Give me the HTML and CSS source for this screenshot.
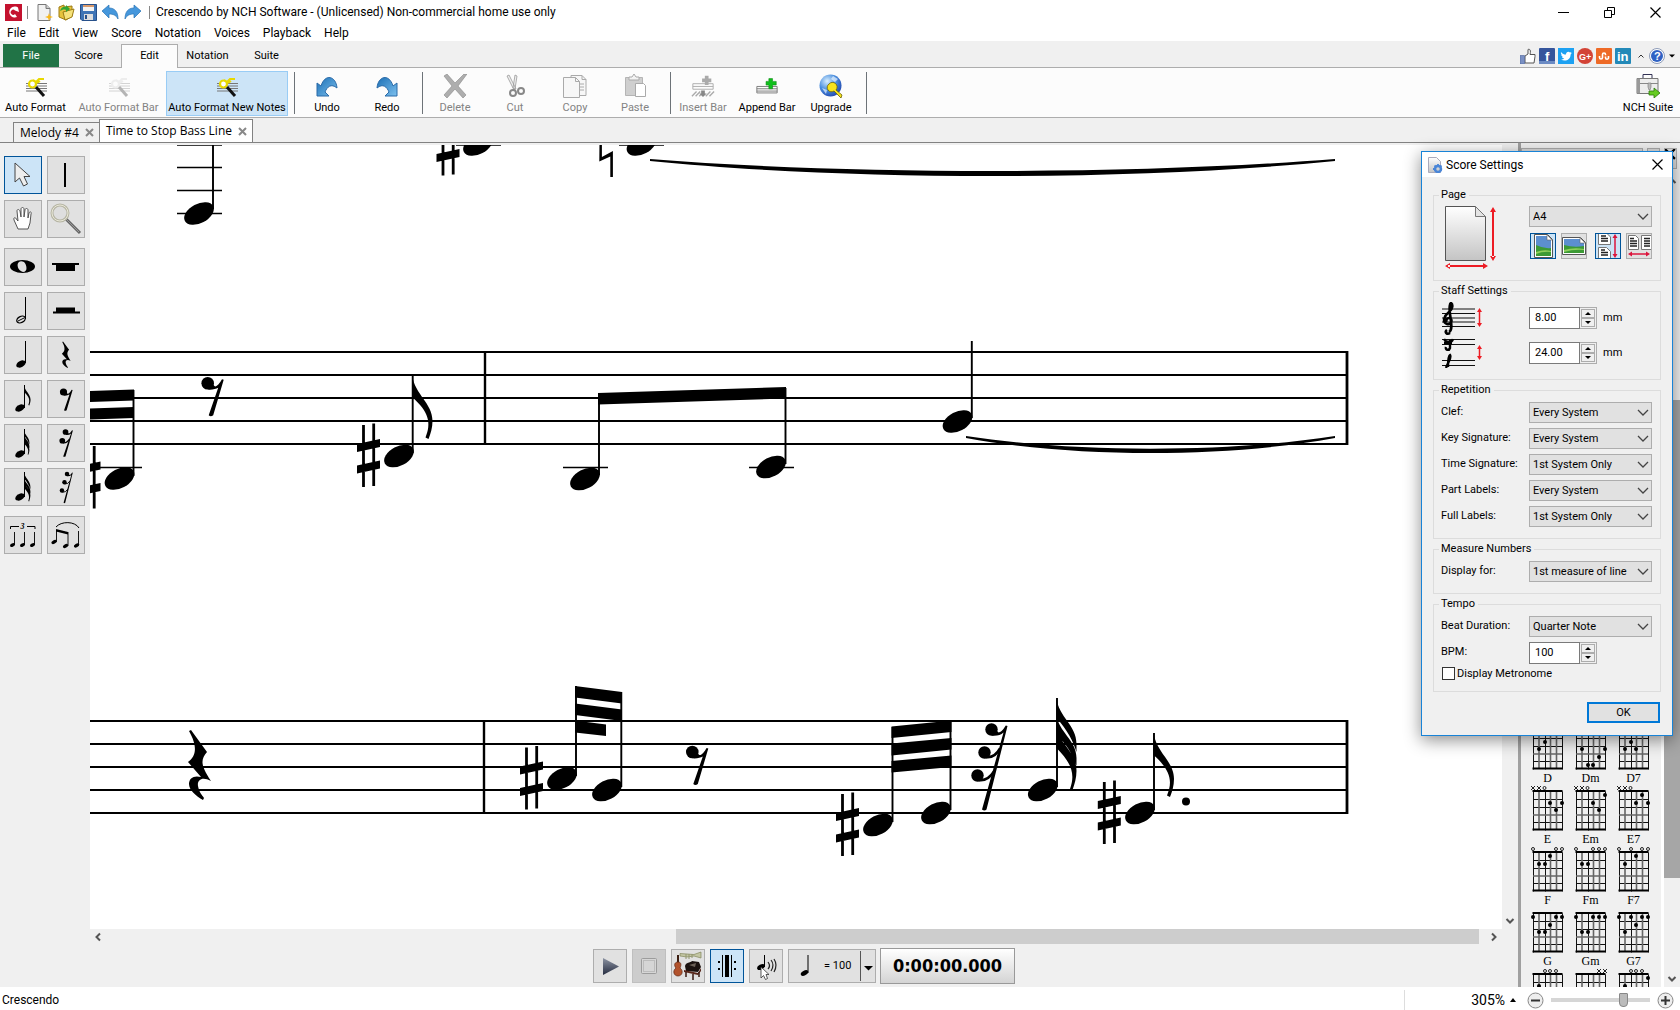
FILE: index.html
```html
<!DOCTYPE html>
<html lang="en">
<head>
<meta charset="utf-8">
<title>Crescendo by NCH Software</title>
<link rel="stylesheet" href="styles.css">
</head>
<body>
<svg class="defs" aria-hidden="true">
  <defs>
    <linearGradient id="blue" x1="0" y1="0" x2="1" y2="1"><stop offset="0" stop-color="#1b6fb5"/><stop offset="1" stop-color="#7cc0ee"/></linearGradient>
    <linearGradient id="paper" x1="0" y1="0" x2="0" y2="1"><stop offset="0" stop-color="#fff"/><stop offset="1" stop-color="#c4c4c4"/></linearGradient>
    <linearGradient id="play" x1="0" y1="0" x2="0" y2="1"><stop offset="0" stop-color="#8d94a3"/><stop offset="1" stop-color="#252c40"/></linearGradient>
    <radialGradient id="globe" cx=".35" cy=".3" r=".8"><stop offset="0" stop-color="#d8efff"/><stop offset=".5" stop-color="#4a8ede"/><stop offset="1" stop-color="#1d3fa8"/></radialGradient>
    <g id="head"><ellipse rx="16" ry="9.6" transform="rotate(-28)"/></g>
    <g id="sharp"><path d="M-6.400-31h2.800v62h-2.800zM3.800-32.500h2.800v62.500h-2.800zM-11.500-12l23-5v8l-23 5zM-11.500 9.500l23-5v8l-23 5z"/></g>
    <g id="rest8"><circle r="6.300"/><path d="M0 6.300C5 6.800 8 5.500 10.500 4.500L1 32Q3 34 5.500 32L16-3.500 14.300-4C12 0 9 3.800 7 3L5 1z"/></g>
    <g id="restq"><path d="M4 0L20 22C13 30 14 36 24 51C15 46 10 50 11 56C12 62 15 65 17 68L16 70C9 66 2 60 2 54C2 48 7 45 14 47L1 32C9 26 11 17 2 1z"/></g>
    <g id="rest32"><circle r="6.200"/><circle cx="-7" cy="23" r="6.200"/><circle cx="-14" cy="46" r="6.200"/><path d="M0 6.200Q8 7 12 3L-9.500 80Q-7 82-5 80L16-3.500 14.300-4Q10 3 7 3L5 1z"/><path d="M-6 27.500Q3 29 8.500 19M-13 50.500Q-4 52 2.500 42" fill="none" stroke="#000" stroke-width="2.600"/></g>
    <g id="rest16"><circle r="6.200"/><circle cx="-7" cy="19" r="6.200"/><path d="M0 6.200Q8 7 12 3L-5 53Q-3 55 0 53L16-3.500 14.300-4Q10 3 7 3L5 1z"/><path d="M-6 23.500Q3 25 9 15" fill="none" stroke="#000" stroke-width="2.600"/></g>
    <g id="flag"><path d="M0 0C3 20 20.500 28 20.500 46C20.500 53 18.500 59 16.500 64L13.500 62.500C19.500 48 17 37 0 22z"/></g>
    <g id="flag3"><path d="M0 0C2 19 20 27 20 46V54C17 44 11 32 0 20zM0 17C2 34 20 42 20 60V68C16 56 10 46 0 37zM0 30C3 46 20 54 20 73C20 80 18 86 16 92L13.500 91C19 76 15 65 0 50z"/></g>
    <g id="wand"><path d="M2 9.500h21M2 12h21M2 14.500h21M2 17h21" stroke="#777"/><circle cx="8.500" cy="10" r="3.500" fill="#fff" stroke="#e8d800" stroke-width="2.200"/><path d="M9 6l3 2 3-3h5M13 9l3-2" fill="none" stroke="#e8d800" stroke-width="2"/><path d="M12 13l8 9" stroke="#111" stroke-width="3"/></g>
    <g id="chordgrid"><path d="M7 4v39M19 4v39M36 4v39M7 12h29M7 20h29M7 35h29" stroke="#111" stroke-width="1" transform="translate(.5 .5)"/><path d="M13 4v39M24.500 4v39M30.500 4v39M7 28h29" stroke="#666" stroke-width="1.600"/><path d="M6.500 4h30M6.500 42.500h30" stroke="#000" stroke-width="2"/></g>
    <g id="chev"><path d="M1 1l5 5 5-5" fill="none" stroke="#444" stroke-width="1.300"/></g>
  </defs>
</svg>

<header class="titlebar">
  <svg class="i17" viewBox="0 0 17 17"><rect width="17" height="17" fill="#c4122f"/><path d="M13 3.500A5.500 5.500 0 1 0 12 13L10 10A2.500 2.500 0 1 1 10 6.500L14 8z" fill="#fff"/></svg>
  <span class="tsep"></span>
  <button aria-label="New"><svg class="i17" viewBox="0 0 17 17"><path d="M2 .5h8l4 4v12H2z" fill="#f1f1f1" stroke="#777"/><path d="M10 .5v4h4" fill="#ccc" stroke="#777"/><path d="M13 9l1 3 3 1-3 1-1 3-1-3-3-1 3-1z" fill="#f8b616"/></svg></button>
  <button aria-label="Open"><svg class="i17" viewBox="0 0 17 17"><path d="M1 3l5-2v2l8-1v10l-6 4-7-3z" fill="#e6c33c" stroke="#9c7b12"/><path d="M5 8l11-3-2 8-7 3z" fill="#f5e27a" stroke="#9c7b12"/><path d="M2 7c1-4 4-5 6-4V1l4 4-4 3V6C6 5 4 6 2 7z" fill="#33a532"/></svg></button>
  <button aria-label="Save"><svg class="i17" viewBox="0 0 17 17"><path d="M.5.5h16v16H2l-1.500-1.500z" fill="#3f74b5" stroke="#27508a"/><path d="M3 1h11v6H3z" fill="#f4f4f4"/><path d="M3 1h11v2H3z" fill="#d99a6c"/><path d="M4 10h9v6H4z" fill="#ddd"/><path d="M5 11h2v4H5z" fill="#27508a"/></svg></button>
  <button aria-label="Undo"><svg class="i17" viewBox="0 0 17 17"><path d="M0 7l7-6v3c6 0 9 4 9 11-2-4-5-5-9-5v4z" fill="#4597dc" stroke="#2673b5" stroke-width=".7"/></svg></button>
  <button aria-label="Redo"><svg class="i17" viewBox="0 0 17 17"><path d="M17 7l-7-6v3c-6 0-9 4-9 11 2-4 5-5 9-5v4z" fill="#4597dc" stroke="#2673b5" stroke-width=".7"/></svg></button>
  <span class="tsep last"></span>
  <h1>Crescendo by NCH Software - (Unlicensed) Non-commercial home use only</h1>
  <div class="winctl">
    <button aria-label="Minimize"><svg viewBox="0 0 11 11"><path d="M0 5.500h11" stroke="#000"/></svg></button>
    <button aria-label="Restore"><svg viewBox="0 0 11 11"><path d="M.5 3.500h7v7h-7zM3.500 3v-2.500h7v7H8" fill="none" stroke="#000"/></svg></button>
    <button aria-label="Close"><svg viewBox="0 0 11 11"><path d="M.5.5l10 10M10.500.5l-10 10" stroke="#000" stroke-width="1.200"/></svg></button>
  </div>
</header>

<nav class="menubar" aria-label="Menu">
  <button>File</button><button>Edit</button><button>View</button><button>Score</button><button>Notation</button><button>Voices</button><button>Playback</button><button>Help</button>
</nav>

<nav class="tabs" aria-label="Ribbon tabs">
  <button class="tab file">File</button><button class="tab">Score</button><button class="tab active">Edit</button><button class="tab">Notation</button><button class="tab">Suite</button>
  <div class="social">
    <a href="#" aria-label="Like"><svg viewBox="0 0 16 16"><path d="M5 8l3-2V1.500c2-1 3 1 2 5h5v2l-1 6.500H5z" fill="#fff" stroke="#555"/><path d="M0 7.500h4.500V16H0z" fill="#7a90c4" stroke="#4b6299" stroke-width=".6"/></svg></a>
    <a href="#" aria-label="Facebook"><svg viewBox="0 0 16 16"><rect width="16" height="16" rx="1" fill="#35559c"/><path d="M0 13h16v3H0z" fill="#6c8bc4"/><text x="6" y="13" class="logo" font-size="13">f</text></svg></a>
    <a href="#" aria-label="Twitter"><svg viewBox="0 0 16 16"><rect width="16" height="16" fill="#1da1f2"/><path d="M3 4c1.500 2 3 2.500 5 2.500C8 4 10.500 3 12 4.500l1.500-.5-.7 1.200 1 0-1.200 1.200C12.500 12 7 14 3 11.500c1.500 0 2.500-.3 3.200-1C5 10.300 4.300 9.700 4 9h1C3.800 8.500 3.200 7.500 3.200 6.600l.9.200C3 6 2.700 5 3 4z" fill="#fff"/></svg></a>
    <a href="#" aria-label="Google Plus"><svg viewBox="0 0 16 16"><circle cx="8" cy="8" r="8" fill="#d34336"/><text x="2" y="11.500" class="logo" font-size="9">G+</text></svg></a>
    <a href="#" aria-label="StumbleUpon"><svg viewBox="0 0 16 16"><rect width="16" height="16" rx="1" fill="#ee6a26"/><path d="M3.500 8v1.500a1.500 1.500 0 0 0 3 0v-3a1.500 1.500 0 0 1 3 0v.8M9.500 8.500v1.200a1.500 1.500 0 0 0 3 0V8" fill="none" stroke="#fff" stroke-width="1.600"/></svg></a>
    <a href="#" aria-label="LinkedIn"><svg viewBox="0 0 16 16"><rect width="16" height="16" rx="1" fill="#2389b8"/><text x="2" y="13" class="logo" font-size="13">in</text></svg></a>
    <button aria-label="Collapse ribbon" class="col"><svg viewBox="0 0 16 16"><path d="M5.500 9.500L8 7l2.500 2.500" fill="none" stroke="#333"/></svg></button>
    <button aria-label="Help"><svg viewBox="0 0 16 16"><circle cx="8" cy="8" r="7.500" fill="#fff" stroke="#8d9bb8"/><circle cx="8" cy="8" r="6" fill="#2f62c4"/><text x="5" y="12" class="logo" font-size="11">?</text></svg></button>
    <button aria-label="Help menu" class="dd"><svg viewBox="0 0 8 16"><path d="M1 6.500h6L4 9.500z"/></svg></button>
  </div>
</nav>

<section class="ribbon" aria-label="Edit tools">
  <button class="w71"><svg viewBox="0 0 24 24"><use href="#wand"/></svg>Auto Format</button>
  <button class="w95" disabled><svg viewBox="0 0 24 24" class="gray"><use href="#wand"/></svg>Auto Format Bar</button>
  <button class="w122 on"><svg viewBox="0 0 24 24"><use href="#wand"/></svg>Auto Format New Notes</button>
  <span class="rsep"></span>
  <button><svg viewBox="0 0 24 24"><path d="M2 9v13h12l-4-4c2-5 6-9 12-4C21 2 10-1 6 12z" fill="url(#blue)" stroke="#2a6aa8"/></svg>Undo</button>
  <button><svg viewBox="0 0 24 24"><path d="M22 9v13H10l4-4C12 13 8 9 2 14 3 2 14-1 18 12z" fill="url(#blue)" stroke="#2a6aa8"/></svg>Redo</button>
  <span class="rsep"></span>
  <button disabled><svg viewBox="0 0 24 24"><path d="M1 2l3-2 8 9 9-9h3l-9 12 8 9-3 3-8-9-8 9-3-3 8-9z" fill="#aeaeae" stroke="#888" stroke-width=".6"/></svg>Delete</button>
  <button disabled><svg viewBox="0 0 24 24"><path d="M4 2l2-1 7 14-2 1zM12 1l2 1-2 13-2-1z" fill="#eee" stroke="#999" stroke-width=".8"/><circle cx="10" cy="19" r="3" fill="none" stroke="#888" stroke-width="2"/><circle cx="18" cy="17" r="3" fill="none" stroke="#888" stroke-width="2"/></svg>Cut</button>
  <button disabled><svg viewBox="0 0 24 24"><path d="M8 1.500h11l4 4v16H8z" fill="#f7f7f7" stroke="#aaa"/><path d="M19 1.500v4h4M17 10h4M17 13h4M17 16h4" fill="none" stroke="#aaa"/><path d="M.5 3.500h12l4 4v16H.5z" fill="#f7f7f7" stroke="#aaa"/><path d="M12.500 3.500v4h4" fill="none" stroke="#aaa"/></svg>Copy</button>
  <button disabled><svg viewBox="0 0 24 24"><path d="M2.500 3.500h17v18h-17z" fill="#cfcfcf" stroke="#b5b5b5"/><path d="M6 6V3h3l2-3 2 3h3v3z" fill="#f4f4f4" stroke="#aaa"/><path d="M12.500 9.500h8l2 2v11h-10z" fill="#fff" stroke="#aaa"/></svg>Paste</button>
  <span class="rsep"></span>
  <button disabled><svg viewBox="0 0 26 24"><path d="M2 9.500h22v6H2zM2 12.500h22" fill="none" stroke="#aaa"/><path d="M15 1h4v3h3v4h-3v3h-4V8h-3V4h3z" fill="#aaa"/><path d="M1 23l5-5M5 23l5-5M16 23l5-5M20 23l5-5M9 23l2-2" stroke="#aaa" stroke-width="1.500"/><path d="M11 17h4v3h2l-4 4-4-4h2z" fill="#888"/></svg>Insert Bar</button>
  <button class="w68"><svg viewBox="0 0 26 24"><path d="M2 12.500h22v7H2zM2 15h22M2 17.500h22" fill="none" stroke="#777"/><path d="M15 4h4v3h4v4h-4v4h-4v-4h-3V7h3z" fill="#0fbf1b" stroke="#07870f" stroke-width=".6"/></svg>Append Bar</button>
  <button><svg viewBox="0 0 24 24"><circle cx="11.500" cy="11.500" r="11" fill="url(#globe)"/><path d="M14 2l5 3-3 3-4-3zM3 14l5 2-1 4z" fill="#e8f4ff" opacity=".7"/><path d="M10 10a4 4 0 1 1 7 6l6 5-1 3-3-3-4-4a4 4 0 0 1-5-7z" fill="#f6e21c" stroke="#6b6200" stroke-width=".8"/></svg>Upgrade</button>
  <span class="rsep"></span>
  <button class="suite"><svg viewBox="0 0 24 24"><path d="M7 4V.5h9V4" fill="none" stroke="#335"/><path d="M1 4.500h21v15H1z" fill="#ededed" stroke="#777"/><path d="M1 4.500h3v15H1z" fill="#999"/><path d="M4 9.500h18" stroke="#888"/><path d="M12 9h3v4l-1 3h-1l-1-3z" fill="#bbb" stroke="#777" stroke-width=".6"/><path d="M13 17h5v-3l6 5-6 5v-3h-5z" fill="#66cc22" stroke="#2b7a0b" stroke-width=".8"/></svg>NCH Suite</button>
</section>

<nav class="docs" aria-label="Documents">
  <div class="doc first">Melody #4<button aria-label="Close Melody #4"><svg viewBox="0 0 9 9"><path d="M1 1l7 7M8 1L1 8" stroke="#888" stroke-width="2"/></svg></button></div>
  <div class="doc current">Time to Stop Bass Line<button aria-label="Close Time to Stop Bass Line"><svg viewBox="0 0 9 9"><path d="M1 1l7 7M8 1L1 8" stroke="#888" stroke-width="2"/></svg></button></div>
</nav>

<main>
  <aside class="palette" aria-label="Tools">
    <div class="pgroup">
      <button class="on" aria-label="Select"><svg viewBox="0 0 36 36"><path d="M10 6v19l4.500-4 4 8 4-2-3.500-7.500h6z" fill="#eee" stroke="#444" stroke-linejoin="round"/></svg></button>
      <button aria-label="Bar line"><svg viewBox="0 0 36 36"><path d="M16 6h2v24h-2z"/></svg></button>
      <button aria-label="Pan"><svg viewBox="0 0 36 36"><path d="M13 28l-4-9c-1-3 2-3 3 0l1 1-1-10c0-2 2-2 3 0l1 6V8c0-2 3-2 3 0v8l1-7c0-2 3-2 3 0v8l1-5c1-2 3-1 2 1l-1 9-2 6z" fill="#fff" stroke="#555" stroke-linejoin="round"/></svg></button>
      <button aria-label="Zoom"><svg viewBox="0 0 36 36"><path d="M18 18l14 14" stroke="#666" stroke-width="3"/><path d="M18 18l13 13" stroke="#999" stroke-width="1"/><circle cx="12" cy="12" r="8" fill="#dedede" stroke="#b6b5a4" stroke-width="3"/><circle cx="12" cy="12" r="8" fill="none" stroke="#e9e8d8" stroke-width="1"/></svg></button>
    </div>
    <div class="pgroup">
      <button aria-label="Whole note"><svg viewBox="0 0 36 36"><path fill-rule="evenodd" d="M5 17.500a12.500 6.500 0 1 1 25 0a12.500 6.500 0 1 1-25 0zM14 13c-3 2-1 9 4 10 5 0 4-7 1-10-2-1-4-1-5 0z"/></svg></button>
      <button aria-label="Whole rest"><svg viewBox="0 0 36 36"><path d="M4 14h27v2h-4v6H8v-6H4z"/></svg></button>
      <button aria-label="Half note"><svg viewBox="0 0 36 36"><path d="M20 4h1v22h-1z"/><ellipse cx="16" cy="26.500" rx="4.500" ry="3" transform="rotate(-28 16 26.500)" fill="none" stroke="#000" stroke-width="1.300"/><path d="M13 28l6-3" stroke="#000"/></svg></button>
      <button aria-label="Half rest"><svg viewBox="0 0 36 36"><path d="M5 20.500v-2h3v-4h19v4h5v2z"/></svg></button>
      <button aria-label="Quarter note"><svg viewBox="0 0 36 36"><path d="M20 4h1v22h-1z"/><use href="#head" transform="translate(16 27) scale(.32)"/></svg></button>
      <button aria-label="Quarter rest"><svg viewBox="0 0 36 36"><use href="#restq" transform="translate(13.500 4.500) scale(.38)"/></svg></button>
      <button aria-label="Eighth note"><svg viewBox="0 0 36 36"><path d="M19 4h1v23h-1z"/><use href="#head" transform="translate(15 27) scale(.32)"/><use href="#flag" transform="translate(19 4) scale(.32)"/></svg></button>
      <button aria-label="Eighth rest"><svg viewBox="0 0 36 36"><use href="#rest8" transform="translate(15.500 11) scale(.57)"/></svg></button>
      <button aria-label="Sixteenth note"><svg viewBox="0 0 36 36"><path d="M19 4h1v25h-1z"/><use href="#head" transform="translate(15 29) scale(.32)"/><use href="#flag3" transform="translate(19 5) scale(.27)"/></svg></button>
      <button aria-label="Sixteenth rest"><svg viewBox="0 0 36 36"><use href="#rest16" transform="translate(17.500 7) scale(.46)"/></svg></button>
      <button aria-label="Thirty-second note"><svg viewBox="0 0 36 36"><path d="M19 3h1v25h-1z"/><use href="#head" transform="translate(15 28) scale(.32)"/><use href="#flag3" transform="translate(19 3) scale(.32)"/></svg></button>
      <button aria-label="Thirty-second rest"><svg viewBox="0 0 36 36"><use href="#rest32" transform="translate(19 5) scale(.36)"/></svg></button>
    </div>
    <div class="pgroup">
      <button aria-label="Triplet"><svg viewBox="0 0 36 36"><path d="M5.500 12V9.500H14M22 9.500h8V12" fill="none" stroke="#000"/><text x="15.500" y="12" class="trip">3</text><path d="M9.500 15v13M19.500 15v13M29.500 15v13" stroke="#000" stroke-width=".9"/><use href="#head" transform="translate(7.500 28) scale(.17)"/><use href="#head" transform="translate(17.500 28) scale(.17)"/><use href="#head" transform="translate(27.500 28) scale(.17)"/></svg></button>
      <button aria-label="Slur"><svg viewBox="0 0 36 36"><path d="M8 10C13 4 27 4 31 11" fill="none" stroke="#000"/><path d="M8 12l12 3v2.500l-12-3z"/><path d="M8.500 13v12M20 15v14M30.500 14v14" stroke="#000" stroke-width=".9"/><use href="#head" transform="translate(6 25) scale(.18)"/><use href="#head" transform="translate(17.500 29) scale(.18)"/><use href="#head" transform="translate(28.500 28.500) scale(.18)"/></svg></button>
    </div>
  </aside>

  <section class="work">
    <div class="view">
      <svg class="score" role="img" aria-label="Score">
        <g transform="translate(-90 -145)">
          <path d="M90 352H1347M90 375H1347M90 398H1347M90 421H1347M90 444H1347M90 721H1347M90 744H1347M90 767H1347M90 790H1347M90 813H1347" stroke="#000" stroke-width="1.800" fill="none"/>
          <path d="M485 351v94M484 720v94" stroke="#000" stroke-width="2.400"/>
          <path d="M1347 351v94M1347 720v94" stroke="#000" stroke-width="2.800"/>
          <!-- ledger lines -->
          <path d="M177 145h45M177 167.500h45M177 190.500h45M177 213.500h45M456 145h45M619 145h45M98 467.500h44M563 467.500h45M749 467.500h45" stroke="#000" stroke-width="1.700"/>
          <!-- stems -->
          <path d="M213 145v64M133.500 390v86M412.700 375v78M599 393v82M785.500 388v76M971.800 341v77M576 686v90M621.300 692v95M892.500 727v95M950.500 721v89M1057 698v89M1154 733v77" stroke="#000" stroke-width="1.900"/>
          <use href="#head" x="199" y="213.500"/><use href="#head" x="478" y="144.500"/><use href="#head" x="641.500" y="144.500"/>
          <use href="#sharp" x="448" y="144.500"/>
          <path d="M599.500 140h2.400v17l11-6v26h-2.600v-20.500l-11 5z"/>
          <path d="M650 159C850 175 1135 175 1335 159L1335 161C1135 181 850 181 650 161z"/>
          <path d="M90 391l44-1.500v11l-44 1.500zM90 408.500l44-1.500v11l-44 1.500z"/>
          <use href="#head" x="119.500" y="478.500"/><use href="#sharp" x="89" y="478.500"/>
          <use href="#rest8" x="207.700" y="383.300"/>
          <use href="#sharp" x="368.500" y="456"/><use href="#head" x="399" y="456"/><use href="#flag" x="412" y="375"/>
          <use href="#head" x="585" y="479"/><use href="#head" x="771" y="467"/>
          <path d="M598 393l188-6v11.500l-188 6z"/>
          <use href="#head" x="957.500" y="421.500"/>
          <path d="M966 436C1076 453 1225 453 1335 436L1335 438C1225 458 1076 458 966 438z"/>
          <use href="#restq" x="187" y="730"/>
          <use href="#sharp" x="531.500" y="778.500"/><use href="#head" x="562" y="778.500"/><use href="#head" x="607" y="790"/>
          <path d="M575 686l47 6v11.500l-47-6zM575 703.500l47 6v11.500l-47-6zM575 720.500l31 4v11.500l-31-3.500z"/>
          <use href="#rest8" x="692.300" y="752"/>
          <use href="#sharp" x="847.500" y="825"/><use href="#head" x="878" y="825"/><use href="#head" x="936" y="813"/>
          <path d="M891.500 726.500l60-6v11.500l-60 6zM891.500 743.500l60-5.500v11.500l-60 6zM891.500 761l60-5.500v11.500l-60 5.500z"/>
          <use href="#rest32" x="991.500" y="729.500"/>
          <use href="#head" x="1042.800" y="790"/><use href="#flag3" x="1056.500" y="698"/>
          <use href="#sharp" x="1109.300" y="813"/><use href="#head" x="1140" y="813"/><use href="#flag" x="1153.500" y="733"/>
          <circle cx="1186" cy="801.500" r="4"/>
        </g>
      </svg>
      <div class="vscroll"><button aria-label="Scroll down"><svg viewBox="0 0 10 10"><path d="M1.500 3L5 6.500 8.500 3"/></svg></button></div>
    </div>
    <div class="hscroll">
      <button aria-label="Scroll left"><svg viewBox="0 0 10 10"><path d="M7 1.500L3.500 5 7 8.500"/></svg></button>
      <div class="htrack"><div class="hthumb" style="width:58.500%"></div></div>
      <button aria-label="Scroll right"><svg viewBox="0 0 10 10"><path d="M3 1.500L6.500 5 3 8.500"/></svg></button>
    </div>
    <div class="transport">
      <button aria-label="Play"><svg viewBox="0 0 32 32"><path d="M9 8v17l16-8.500z" fill="url(#play)"/></svg></button>
      <button class="off" aria-label="Stop"><svg viewBox="0 0 32 32"><rect x="8.500" y="8.500" width="15" height="15" rx="1" fill="#d6d6d6" stroke="#9c9c9c"/><rect x="10.500" y="10.500" width="11" height="11" fill="none" stroke="#bcbcbc"/></svg></button>
      <button aria-label="Instruments"><svg viewBox="0 0 32 32"><path d="M8 3.500l14 1 7-2.500v6l-7-2-7 1-7-1z" fill="#c3c6a4" stroke="#83875c" stroke-width=".7"/><path d="M14 4v5M17 4v5M20 4v4" stroke="#92966e"/><path d="M5 5h2v11H5z" fill="#3b1c10"/><path d="M6 12c4 0 3 4 2 6 4 3 2 8-2 8s-6-5-2-8c-2-2-2-6 2-6z" fill="#b2532d" stroke="#602714" stroke-width=".7"/><path d="M13 16c1-4 5-3 7-5l7 1 2 5-3 5-12-1z" fill="#1b1210"/><path d="M12 20l14 3 3-5v3l-3 4-14-3z" fill="#58261a"/><path d="M14 22v5M21 24v6M27 22v5" stroke="#3a1810" stroke-width="1.500"/><path d="M17 15l7-2-1 4z" fill="#6c6158"/></svg></button>
      <button class="on" aria-label="Loop"><svg viewBox="0 0 32 32"><path d="M14 5h4v22h-4zM11 5h1v22h-1zM20 5h1v22h-1zM7 11h2v2H7zM7 18h2v2H7zM23 11h2v2h-2zM23 18h2v2h-2z"/></svg></button>
      <button aria-label="Play note on edit"><svg viewBox="0 0 32 32"><path d="M14 5h1v12h-1z"/><use href="#head" transform="translate(11 17) scale(.26)"/><path d="M18 12q3 4 0 7M21 10q4 5 0 11M24 9q4 6 0 13" fill="none" stroke="#222" stroke-width="1.200"/><path d="M11 17v11l2.500-2.500 2 4 2-1-1.500-4h3z" fill="#fff" stroke="#333" stroke-width=".8"/></svg></button>
      <button class="tempo" aria-label="Tempo"><svg viewBox="0 0 32 32"><path d="M18.500 5h1v18h-1z"/><use href="#head" transform="translate(15.500 23) scale(.25)"/></svg><span>= 100</span><svg class="tdrop" viewBox="0 0 15 32"><path d="M.5 1v30" stroke="#555"/><path d="M4 16h9l-4.500 4.500z"/></svg></button>
      <output class="clock">0:00:00.000</output>
    </div>
  </section>

  <aside class="chords" aria-label="Chords">
    <div class="chead"><span class="ctitle"></span><button aria-label="Scroll"></button><button aria-label="Close panel"><svg viewBox="0 0 10 20"><path d="M0 0l9 9M9 0L0 9" stroke="#000" stroke-width="2"/></svg></button></div>
    <div class="cbody">
      <div class="clist">
        <figure><svg viewBox="0 0 43 43"><use href="#chordgrid"/><path class="dots" d="M13 23h0M19 16h0"/></svg><figcaption>D</figcaption></figure>
        <figure><svg viewBox="0 0 43 43"><use href="#chordgrid"/><path class="dots" d="M13 23h0M36 23h0M30 31h0M19 39h0M24 39h0"/></svg><figcaption>Dm</figcaption></figure>
        <figure><svg viewBox="0 0 43 43"><use href="#chordgrid"/><path class="dots" d="M13 23h0M19 16h0M24 23h0"/></svg><figcaption>D7</figcaption></figure>
        <figure><svg viewBox="0 0 43 43"><use href="#chordgrid"/><path class="mk" d="M5-1l4 4m0-4l-4 4M11-1l4 4m0-4l-4 4M17 1a1.500 1.500 0 1 0 3 0a1.500 1.500 0 1 0-3 0"/><path class="dots" d="M24 16h0M36 16h0M30 23h0"/></svg><figcaption>E</figcaption></figure>
        <figure><svg viewBox="0 0 43 43"><use href="#chordgrid"/><path class="mk" d="M5-1l4 4m0-4l-4 4M11-1l4 4m0-4l-4 4M17 1a1.500 1.500 0 1 0 3 0a1.500 1.500 0 1 0-3 0"/><path class="dots" d="M24 16h0M36 8h0M30 23h0"/></svg><figcaption>Em</figcaption></figure>
        <figure><svg viewBox="0 0 43 43"><use href="#chordgrid"/><path class="mk" d="M5-1l4 4m0-4l-4 4M11-1l4 4m0-4l-4 4M17 1a1.500 1.500 0 1 0 3 0a1.500 1.500 0 1 0-3 0"/><path class="dots" d="M30 8h0M24 16h0M36 16h0"/></svg><figcaption>E7</figcaption></figure>
        <figure><svg viewBox="0 0 43 43"><use href="#chordgrid"/><g class="mk"><circle cx="7" cy="1" r="1.500"/><circle cx="30" cy="1" r="1.500"/><circle cx="36" cy="1" r="1.500"/></g><path class="dots" d="M24 8h0M13 16h0M19 16h0"/></svg><figcaption>F</figcaption></figure>
        <figure><svg viewBox="0 0 43 43"><use href="#chordgrid"/><g class="mk"><circle cx="7" cy="1" r="1.500"/><circle cx="24" cy="1" r="1.500"/><circle cx="30" cy="1" r="1.500"/><circle cx="36" cy="1" r="1.500"/></g><path class="dots" d="M13 16h0M19 16h0"/></svg><figcaption>Fm</figcaption></figure>
        <figure><svg viewBox="0 0 43 43"><use href="#chordgrid"/><g class="mk"><circle cx="7" cy="1" r="1.500"/><circle cx="19" cy="1" r="1.500"/><circle cx="30" cy="1" r="1.500"/><circle cx="36" cy="1" r="1.500"/></g><path class="dots" d="M24 8h0M13 16h0"/></svg><figcaption>F7</figcaption></figure>
        <figure><svg viewBox="0 0 43 43"><use href="#chordgrid"/><path class="dots" d="M7 8h0M30 8h0M36 8h0M24 16h0M13 23h0M19 23h0"/></svg><figcaption>G</figcaption></figure>
        <figure><svg viewBox="0 0 43 43"><use href="#chordgrid"/><path class="dots" d="M7 8h0M24 8h0M30 8h0M36 8h0M13 23h0M19 23h0"/></svg><figcaption>Gm</figcaption></figure>
        <figure><svg viewBox="0 0 43 43"><use href="#chordgrid"/><path class="dots" d="M7 8h0M19 8h0M30 8h0M36 8h0M24 16h0M13 23h0"/></svg><figcaption>G7</figcaption></figure>
        <figure><svg viewBox="0 0 43 43"><use href="#chordgrid"/><g class="mk"><circle cx="19" cy="1" r="1.500"/><circle cx="24" cy="1" r="1.500"/><circle cx="30" cy="1" r="1.500"/></g><path class="dots" d="M13 16h0"/></svg></figure>
        <figure><svg viewBox="0 0 43 43"><use href="#chordgrid"/><path class="mk" d="M28-1l4 4m0-4l-4 4M34-1l4 4m0-4l-4 4"/></svg></figure>
        <figure><svg viewBox="0 0 43 43"><use href="#chordgrid"/><g class="mk"><circle cx="19" cy="1" r="1.500"/><circle cx="24" cy="1" r="1.500"/><circle cx="30" cy="1" r="1.500"/></g><path class="dots" d="M36 8h0M13 16h0"/></svg></figure>
      </div>
      <div class="cscroll">
        <button aria-label="Scroll chords up"><svg viewBox="0 0 10 10"><path d="M1.500 7L5 3.500 8.500 7"/></svg></button>
        <div class="ctrack"><div class="cthumb"></div></div>
        <button aria-label="Scroll chords down"><svg viewBox="0 0 10 10"><path d="M1.500 3L5 6.500 8.500 3"/></svg></button>
      </div>
    </div>
  </aside>
</main>

<footer class="status">
  <span class="sname">Crescendo</span>
  <span class="ssep"></span>
  <button class="pct">305%<svg viewBox="0 0 6 4"><path d="M0 4l3-4 3 4z"/></svg></button>
  <button class="round" aria-label="Zoom out"><svg viewBox="0 0 17 17"><circle cx="8.500" cy="8.500" r="7.500" fill="#eee" stroke="#888"/><path d="M4 8.500h9" stroke="#333" stroke-width="2"/></svg></button>
  <input type="range" min="0" max="100" value="76" aria-label="Zoom">
  <button class="round" aria-label="Zoom in"><svg viewBox="0 0 17 17"><circle cx="8.500" cy="8.500" r="7.500" fill="#eee" stroke="#888"/><path d="M4 8.500h9M8.500 4v9" stroke="#333" stroke-width="2"/></svg></button>
</footer>

<section class="dialog" role="dialog" aria-labelledby="dlg">
  <header>
    <svg viewBox="0 0 16 16"><path d="M1.500.5h8l4 4v11h-12z" fill="url(#paper)" stroke="#aab"/><circle cx="11" cy="12" r="3" fill="none" stroke="#4a86d8" stroke-width="2.500"/><path d="M11 7v2M6 12h2M7.500 8.500l1.500 1.500M14.500 8.500L13 10" stroke="#4a86d8" stroke-width="1.800"/></svg>
    <h2 id="dlg">Score Settings</h2>
    <button aria-label="Close dialog"><svg viewBox="0 0 11 11"><path d="M.5.5l10 10M10.500.5l-10 10" stroke="#000" stroke-width="1.200"/></svg></button>
  </header>
  <form>
    <fieldset class="fpage"><legend>Page</legend>
      <svg class="pageart" viewBox="0 0 56 66"><path d="M4.500.5h30l10 10v44h-40z" fill="url(#paper)" stroke="#555"/><path d="M34.500.5v10h10z" fill="#e4e4e4" stroke="#777"/><g fill="#ed1c24"><path d="M51 4h2v47h-2zM49 6l3-5 3 5zM49 50l3 5 3-5zM7 59h37v2H7zM9 57l-5 3 5 3zM42 57l5 3-5 3z"/></g></svg>
      <div class="pagectl">
        <span class="sel"><select aria-label="Page size"><option>A4</option></select><svg viewBox="0 0 12 8"><use href="#chev"/></svg></span>
        <div class="picks">
          <button type="button" class="on" aria-label="Portrait"><svg viewBox="0 0 24 24"><path d="M3.500.5h13l5 5v18h-18z" fill="#fff" stroke="#555"/><path d="M5 2h11l4 4v16H5z" fill="#5c8fcf"/><path d="M5 11q8 4 15 3v8H5z" fill="#3c9a35"/><path d="M5 18q8-3 15-1v1q-8-1-15 2z" fill="#8fd05c"/><path d="M16 1v5h5z" fill="#fff" stroke="#666" stroke-width=".6"/></svg></button>
          <button type="button" aria-label="Landscape"><svg viewBox="0 0 24 24"><path d="M.5 3.500h18l5 5v12H.5z" fill="#fff" stroke="#555"/><path d="M2 5h16l4 4v10H2z" fill="#5c8fcf"/><path d="M2 11q10 3 20 1v7H2z" fill="#3c9a35"/><path d="M2 16q10-3 20-1v1q-10-1-20 2z" fill="#8fd05c"/><path d="M18 4v5h5z" fill="#fff" stroke="#666" stroke-width=".6"/></svg></button>
          <button type="button" class="on gap" aria-label="Vertical pages"><svg viewBox="0 0 24 24"><path d="M2.500-1v11.500h12V3l-4-4zM2.500 13.500h8l4 4V26h-12z" fill="#fff" stroke="#777"/><path d="M5 2h5M5 4.500h7M5 7h7M5 16h4M5 18.500h7M5 21h7" stroke="#222" stroke-width="1.300"/><path d="M19 3v18" stroke="#dc143c" stroke-width="1.500"/><path d="M16.500 4L19 0l2.500 4zM16.500 20l2.500 4 2.500-4z" fill="#dc143c"/></svg></button>
          <button type="button" aria-label="Horizontal pages"><svg viewBox="0 0 24 24"><path d="M1.500 1.500h7l3 3v11h-10zM24 1.500h-9.500v14H24" fill="#fff" stroke="#777"/><path d="M3 4.500h4M3 7h7M3 9.500h7M3 12h7M17 4.500h6M17 7h6M17 9.500h6M17 12h6" stroke="#222" stroke-width="1.300"/><path d="M4 20h16" stroke="#dc143c" stroke-width="1.500"/><path d="M5 17.500L1 20l4 2.500zM19 17.500l4 2.500-4 2.500z" fill="#dc143c"/></svg></button>
        </div>
      </div>
    </fieldset>

    <fieldset class="fstaff"><legend>Staff Settings</legend>
      <svg class="staffart" viewBox="0 0 42 66"><path d="M1 7h33M1 11.500h33M1 16h33M1 20h33M1 24.500h33M1 37.500h33M1 42.500h33M1 58.500h33M1 63.500h33" stroke="#111"/><path d="M9 31c-3 2-6-1-3-3M8 30c4-2 2-10 1-18-1-7 0-11 1-11 2 1 2 6-2 9-5 4-7 10-2 12 5 1 6-6 2-6-3 0-3 3-2 4" fill="none" stroke="#000" stroke-width="2.600"/><path d="M3 37c2 4 8 4 9 0M9 38v8c-1 3-5 2-4-1M3 41h8M5 66c2-6 6-10 4-13-2 1-2 6-2 12" fill="none" stroke="#000" stroke-width="2.400"/><path d="M38.500 9v13M38.500 46v9" stroke="#ed1c24" stroke-width="1.500"/><path d="M36 10l2.500-4 2.500 4zM36 21l2.500 4 2.500-4zM36 47l2.500-4 2.500 4zM36 54l2.500 4 2.500-4z" fill="#ed1c24"/></svg>
      <div class="spins">
        <div class="row2"><input type="text" value="8.00" aria-label="Staff height"><span class="spin"><button type="button" aria-label="Increase"></button><button type="button" aria-label="Decrease"></button></span><span>mm</span></div>
        <div class="row2"><input type="text" value="24.00" aria-label="Staff spacing"><span class="spin"><button type="button" aria-label="Increase"></button><button type="button" aria-label="Decrease"></button></span><span>mm</span></div>
      </div>
    </fieldset>

    <fieldset><legend>Repetition</legend>
      <div class="rows">
        <div class="row"><label for="clef">Clef:</label><span class="sel"><select id="clef"><option>Every System</option></select><svg viewBox="0 0 12 8"><use href="#chev"/></svg></span></div>
        <div class="row"><label for="key">Key Signature:</label><span class="sel"><select id="key"><option>Every System</option></select><svg viewBox="0 0 12 8"><use href="#chev"/></svg></span></div>
        <div class="row"><label for="time">Time Signature:</label><span class="sel"><select id="time"><option>1st System Only</option></select><svg viewBox="0 0 12 8"><use href="#chev"/></svg></span></div>
        <div class="row"><label for="part">Part Labels:</label><span class="sel"><select id="part"><option>Every System</option></select><svg viewBox="0 0 12 8"><use href="#chev"/></svg></span></div>
        <div class="row"><label for="full">Full Labels:</label><span class="sel"><select id="full"><option>1st System Only</option></select><svg viewBox="0 0 12 8"><use href="#chev"/></svg></span></div>
      </div>
    </fieldset>

    <fieldset><legend>Measure Numbers</legend>
      <div class="rows"><div class="row"><label for="disp">Display for:</label><span class="sel"><select id="disp"><option>1st measure of line</option></select><svg viewBox="0 0 12 8"><use href="#chev"/></svg></span></div></div>
    </fieldset>

    <fieldset><legend>Tempo</legend>
      <div class="rows">
        <div class="row"><label for="beat">Beat Duration:</label><span class="sel"><select id="beat"><option>Quarter Note</option></select><svg viewBox="0 0 12 8"><use href="#chev"/></svg></span></div>
        <div class="row"><label for="bpm">BPM:</label><div class="row2"><input type="text" id="bpm" value="100"><span class="spin"><button type="button" aria-label="Increase"></button><button type="button" aria-label="Decrease"></button></span></div></div>
      </div>
      <label class="check"><input type="checkbox">Display Metronome</label>
    </fieldset>
    <button type="button" class="ok">OK</button>
  </form>
</section>
</body>
</html>
```
FILE: styles.css
```css
:root {
  --ui: Roboto, "Open Sans", sans-serif;
  --small: Roboto, "Open Sans", sans-serif;
  --face: #f0f0f0;
  --line: #adadad;
}
* { box-sizing: border-box; }
body { margin: 0; height: 100vh; display: flex; flex-direction: column; background: #fff; color: #000; font: 12px/16px var(--ui); overflow: hidden; }
button, input, select { font: inherit; color: inherit; }
button { border: 0; padding: 0; background: none; }
svg { display: block; }
.defs { position: absolute; width: 0; height: 0; }

/* Title bar and menu */
.titlebar { height: 24px; display: flex; align-items: center; padding-left: 5px; gap: 5px; flex: none; }
.i17 { width: 17px; height: 17px; }
.tsep { width: 1px; height: 13px; background: #888; margin-right: 3px; }
.tsep.last { margin: 0 1px 0 3px; }
h1, h2 { margin: 0; font-size: 12px; font-weight: 400; }
.titlebar h1 { flex: 1; }
.winctl { display: flex; padding-right: 2px; }
.winctl button { width: 46px; height: 20px; display: grid; place-items: center; }
.winctl svg { width: 11px; height: 11px; }
.menubar { height: 17px; display: flex; gap: 13px; padding-left: 7px; flex: none; }

/* Ribbon */
.tabs { flex: none; height: 27px; background: var(--face); display: flex; align-items: flex-end; padding: 0 4px 0 3px; border-bottom: 1px solid var(--line); font: 11px/16px var(--small); }
.tab { width: 59px; height: 23px; }
.tab.file { width: 56px; background: #217346; color: #fff; }
.tab.active { width: 57px; height: 24px; margin: 0 0 -1px 3px; padding-bottom: 2px; background: #fcfcfc; border: 1px solid var(--line); border-bottom: 0; }
.social { margin-left: auto; display: flex; gap: 3px; height: 23px; align-items: center; }
.social svg { width: 16px; height: 16px; overflow: hidden; }
.social .dd svg { width: 8px; }
.social .col { margin: 0 -3px 0 -1px; }
.logo { fill: #fff; font-family: "Liberation Sans", sans-serif; font-weight: 700; }
.ribbon { flex: none; height: 50px; background: #fcfcfc; border-bottom: 1px solid var(--line); display: flex; padding: 3px 0 1px; font: 11px/14px var(--small); }
.ribbon button { width: 60px; display: flex; flex-direction: column; align-items: center; gap: 3px; padding-top: 3px; white-space: nowrap; flex: none; }
.ribbon svg { width: 24px; height: 24px; }
.ribbon .w71 { width: 71px; }
.ribbon .w95 { width: 95px; }
.ribbon .w122 { width: 122px; margin-right: 1px; }
.ribbon .w68 { width: 68px; }
.ribbon .on { background: #cce4f7; border: 1px solid #99ccf5; padding-top: 2px; }
.ribbon button:disabled { color: #838383; }
.gray { filter: grayscale(1); opacity: .3; }
.rsep { width: 1px; background: #6d7378; margin: 1px 2px 2px 5px; }
.ribbon .suite { margin-left: auto; width: 64px; }

/* Document tabs */
.docs { flex: none; height: 25px; background: var(--face); display: flex; align-items: flex-end; padding-left: 13px; border-bottom: 1px solid #828282; font: 12px/18px "Open Sans", sans-serif; }
.doc { display: flex; align-items: center; gap: 6px; height: 20px; padding: 0 5px 0 6px; border: 1px solid #828282; border-width: 1px 0 0 1px; }
.doc.current { height: 23px; background: #fff; border-right-width: 1px; }
.doc svg { width: 9px; height: 9px; }

/* Work area */
main { flex: 1; min-height: 0; display: grid; grid-template-columns: 90px minmax(0, 1fr) 162px; background: var(--face); }
.palette { padding: 13px 5px 0 4px; display: flex; flex-direction: column; gap: 10px; }
.pgroup { display: grid; grid-template-columns: 38px 38px; gap: 6px 5px; }
.palette button { width: 38px; height: 38px; }
.palette button, .transport button { background: #e1e1e1; border: 1px solid var(--line); }
.palette .on, .transport button.on, .picks button.on { background: #cce4f7; border-color: #005499; }
.palette svg { width: 36px; height: 36px; }
.trip { font: italic 700 8px "Liberation Serif", serif; }
.work { padding-top: 2px; display: grid; grid-template-rows: minmax(0, 1fr) 16px 42px; min-width: 0; }
.view { display: flex; min-height: 0; }
.score { flex: 1; min-width: 0; height: 100%; background: #fff; }
.vscroll { width: 16px; display: flex; align-items: flex-end; }
.vscroll button, .hscroll button, .cscroll button { width: 16px; height: 16px; display: grid; place-items: center; }
.vscroll svg, .hscroll svg, .cscroll svg { width: 10px; height: 10px; fill: none; stroke: #555; stroke-width: 2; }
.hscroll { display: flex; padding-right: 16px; }
.htrack { flex: 1; padding-right: 7px; display: flex; justify-content: flex-end; }
.hthumb { height: 15px; background: #cdcdcd; }
.transport { display: flex; justify-content: center; align-items: flex-start; gap: 5px; padding-top: 4px; }
.transport button { width: 34px; height: 34px; }
.transport .off { background: #ccc; border-color: #bfbfbf; }
.transport svg { width: 32px; height: 32px; }
.transport .tempo { width: 88px; display: flex; align-items: center; gap: 3px; font: 11px/14px var(--small); }
.transport .tempo .tdrop { width: 15px; margin-left: auto; }
.clock { width: 135px; height: 36px; margin: -1px 0 0 -1px; border: 1px solid #999; background: linear-gradient(#fff, #d4d4d4); display: grid; place-items: center; font: 700 18px/22px "DejaVu Sans Condensed", "DejaVu Sans", sans-serif; }

/* Chord panel */
.chords { border-left: 3px solid #a0a0a0; display: flex; flex-direction: column; min-height: 0; padding-top: 5px; }
.chead { flex: none; height: 25px; display: flex; gap: 4px; padding-right: 3px; }
.ctitle { flex: 1; background: #dcdcdc; border: 1px solid var(--line); }
.chead button { width: 13px; border: 1px solid var(--line); background: #ddd; height: 21px; overflow: hidden; }
.cbody { flex: 1; min-height: 0; display: flex; }
.clist { width: 143px; border-right: 3px solid #fff; padding: 553px 0 0 5px; display: grid; grid-template-columns: 43px 43px 43px; grid-auto-rows: 61px; overflow: hidden; }
figure { margin: 0; }
figure svg { width: 43px; height: 43px; overflow: visible; }
figcaption { font: 12px/18px "Liberation Serif", serif; text-align: center; }
.dots { stroke: #000; stroke-width: 4; stroke-linecap: round; }
.mk { fill: none; stroke: #222; stroke-width: 1; }
.cscroll { flex: 1; display: flex; flex-direction: column; }
.ctrack { flex: 1; padding: 211px 0 93px; display: flex; }
.cthumb { flex: 1; background: #a6a6a6; }

/* Status bar */
.status { flex: none; height: 23px; background: #fff; display: flex; align-items: center; padding: 3px 6px 0 2px; }
.sname { flex: 1; }
.ssep { width: 1px; height: 20px; background: #ddd; margin-right: 66px; }
.pct { display: flex; align-items: center; gap: 5px; font-size: 14px; margin-right: 11px; }
.pct svg { width: 6px; height: 4px; }
.round svg { width: 17px; height: 17px; }
.status input { appearance: none; width: 99px; height: 16px; margin: 0 7px; background: linear-gradient(#d6d6d6, #d6d6d6) center / 100% 4px no-repeat; }
.status input::-webkit-slider-thumb { appearance: none; width: 9px; height: 14px; background: #bbb; border: 1px solid #888; border-radius: 1px 1px 4px 4px; }

/* Score settings dialog */
.dialog { position: absolute; right: 7px; top: 151px; width: 252px; background: var(--face); border: 1px solid #1883d7; box-shadow: 0 4px 16px rgba(0, 0, 0, .45); font: 11px/14px var(--small); }
.dialog header { height: 25px; background: #fff; display: flex; align-items: center; padding: 0 9px 0 5px; gap: 3px; }
.dialog header svg { width: 16px; height: 16px; }
.dialog header button svg { width: 11px; height: 11px; }
.dialog h2 { flex: 1; font: 12px/16px var(--ui); }
.dialog form { display: flex; flex-direction: column; gap: 3px; padding: 11px 11px 12px; }
fieldset { margin: 0; padding: 5px 8px 11px 7px; border: 1px solid #dcdcdc; min-width: 0; }
legend { padding: 0 3px 0 2px; margin-left: -2px; }
.fpage { display: flex; justify-content: space-between; padding-top: 4px; padding-bottom: 21px; }
.fpage .pageart { width: 56px; height: 66px; margin-bottom: -14px; }
.pagectl { width: 123px; }
.picks { display: flex; justify-content: space-between; margin-top: 6px; padding-left: 1px; }
.picks button { width: 26px; height: 26px; border: 1px solid var(--line); background: #e1e1e1; }
.picks .gap { margin-left: 3px; }
.picks svg { width: 24px; height: 24px; overflow: hidden; }
.fstaff { display: flex; justify-content: space-between; padding-top: 4px; padding-bottom: 11px; }
.staffart { width: 42px; height: 66px; }
.spins { width: 123px; display: grid; gap: 13px; align-content: start; padding-top: 5px; }
.row2 { display: flex; align-items: center; height: 22px; }
.row2 input { width: 51px; height: 22px; border: 1px solid #7a7a7a; background: #fff; padding: 0 5px 1px; margin: 0; }
.row2 > span:last-child:not(.spin) { margin-left: 6px; }
.spin { width: 17px; height: 22px; border: 1px solid var(--line); border-left: 0; padding: 1px; display: grid; grid-template-rows: 1fr 1fr; }
.spin button { border: 1px solid var(--line); display: grid; place-items: center; }
.spin button::before { content: ""; border: 3px solid transparent; border-top: 0; border-bottom: 3px solid #000; }
.spin button:last-child::before { border-bottom: 0; border-top: 3px solid #000; }
.rows { display: grid; gap: 5px; }
.row { display: grid; grid-template-columns: 1fr 123px; height: 21px; }
.row > label { padding-top: 3px; }
.sel { display: grid; grid-template-columns: 1fr; align-items: center; height: 21px; }
.sel select { appearance: none; grid-area: 1 / 1; width: 100%; height: 21px; border: 1px solid var(--line); border-radius: 0; background: #e1e1e1; padding: 0 3px; margin: 0; }
.sel svg { grid-area: 1 / 1; justify-self: end; width: 12px; height: 8px; margin-right: 3px; pointer-events: none; }
.check { display: flex; align-items: center; gap: 2px; margin: 4px 0 0 1px; height: 13px; }
.check input { appearance: none; width: 13px; height: 13px; margin: 0; border: 1px solid #333; background: #fff; }
.ok { align-self: flex-end; width: 73px; height: 21px; margin: 7px 1px 0 0; background: #e1e1e1; border: 2px solid #0078d7; }
```
